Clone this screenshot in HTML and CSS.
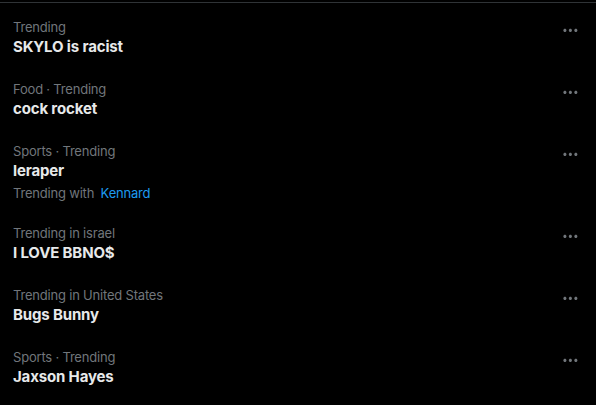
FILE: index.html
```html
<!DOCTYPE html>
<html lang="en">
<head>
    <meta charset="utf-8">
    <title>Trends</title>
    <link rel="stylesheet" href="styles.css">
</head>
<body>
    <div class="trends">
        <!-- Trend rows -->
        <div class="trend">
            <div class="trend-text">
                <div class="meta">Trending</div>
                <div class="title">SKYLO is racist</div>
            </div>
            <button class="more" aria-label="More">
                <svg viewBox="0 0 24 24"><path d="M3 12c0-1.1.9-2 2-2s2 .9 2 2-.9 2-2 2-2-.9-2-2zm9 2c1.1 0 2-.9 2-2s-.9-2-2-2-2 .9-2 2 .9 2 2 2zm7 0c1.1 0 2-.9 2-2s-.9-2-2-2-2 .9-2 2 .9 2 2 2z"/></svg>
            </button>
        </div>

        <div class="trend">
            <div class="trend-text">
                <div class="meta">Food · Trending</div>
                <div class="title">cock rocket</div>
            </div>
            <button class="more" aria-label="More">
                <svg viewBox="0 0 24 24"><path d="M3 12c0-1.1.9-2 2-2s2 .9 2 2-.9 2-2 2-2-.9-2-2zm9 2c1.1 0 2-.9 2-2s-.9-2-2-2-2 .9-2 2 .9 2 2 2zm7 0c1.1 0 2-.9 2-2s-.9-2-2-2-2 .9-2 2 .9 2 2 2z"/></svg>
            </button>
        </div>

        <div class="trend">
            <div class="trend-text">
                <div class="meta">Sports · Trending</div>
                <div class="title">leraper</div>
                <div class="with">Trending with <a href="#">Kennard</a></div>
            </div>
            <button class="more" aria-label="More">
                <svg viewBox="0 0 24 24"><path d="M3 12c0-1.1.9-2 2-2s2 .9 2 2-.9 2-2 2-2-.9-2-2zm9 2c1.1 0 2-.9 2-2s-.9-2-2-2-2 .9-2 2 .9 2 2 2zm7 0c1.1 0 2-.9 2-2s-.9-2-2-2-2 .9-2 2 .9 2 2 2z"/></svg>
            </button>
        </div>

        <div class="trend">
            <div class="trend-text">
                <div class="meta">Trending in israel</div>
                <div class="title">I LOVE BBNO$</div>
            </div>
            <button class="more" aria-label="More">
                <svg viewBox="0 0 24 24"><path d="M3 12c0-1.1.9-2 2-2s2 .9 2 2-.9 2-2 2-2-.9-2-2zm9 2c1.1 0 2-.9 2-2s-.9-2-2-2-2 .9-2 2 .9 2 2 2zm7 0c1.1 0 2-.9 2-2s-.9-2-2-2-2 .9-2 2 .9 2 2 2z"/></svg>
            </button>
        </div>

        <div class="trend">
            <div class="trend-text">
                <div class="meta">Trending in United States</div>
                <div class="title">Bugs Bunny</div>
            </div>
            <button class="more" aria-label="More">
                <svg viewBox="0 0 24 24"><path d="M3 12c0-1.1.9-2 2-2s2 .9 2 2-.9 2-2 2-2-.9-2-2zm9 2c1.1 0 2-.9 2-2s-.9-2-2-2-2 .9-2 2 .9 2 2 2zm7 0c1.1 0 2-.9 2-2s-.9-2-2-2-2 .9-2 2 .9 2 2 2z"/></svg>
            </button>
        </div>

        <div class="trend">
            <div class="trend-text">
                <div class="meta">Sports · Trending</div>
                <div class="title">Jaxson Hayes</div>
            </div>
            <button class="more" aria-label="More">
                <svg viewBox="0 0 24 24"><path d="M3 12c0-1.1.9-2 2-2s2 .9 2 2-.9 2-2 2-2-.9-2-2zm9 2c1.1 0 2-.9 2-2s-.9-2-2-2-2 .9-2 2 .9 2 2 2zm7 0c1.1 0 2-.9 2-2s-.9-2-2-2-2 .9-2 2 .9 2 2 2z"/></svg>
            </button>
        </div>
    </div>
</body>
</html>
```

FILE: styles.css
```css
/* Dark trends list */
body {
    margin: 0;
    padding-top: 2px;
    background-color: #000;
    font-family: Inter, "Noto Sans", sans-serif;
}

.trends {
    border-top: 1px solid #2f3336;
    padding-top: 4px;
}

.trend {
    display: flex;
    align-items: flex-start;
    padding: 12px 16px 12px 13px;
}

.trend-text {
    flex: 1;
}

.meta,
.with {
    font-size: 13px;
    line-height: 16px;
    letter-spacing: -0.2px;
    color: #71767b;
}

.title {
    margin-top: 2px;
    font-size: 15px;
    line-height: 20px;
    font-weight: 700;
    letter-spacing: -0.15px;
    color: #e7e9ea;
}

.with {
    margin-top: 4px;
}

.with a {
    margin-left: 3px;
    color: #1d9bf0;
    text-decoration: none;
}

.more {
    margin-top: 2px;
    padding: 0;
    width: 18.75px;
    height: 18.75px;
    background: none;
    border: none;
    cursor: pointer;
}

.more svg {
    display: block;
    width: 18.75px;
    height: 18.75px;
    fill: #71767b;
}
```
